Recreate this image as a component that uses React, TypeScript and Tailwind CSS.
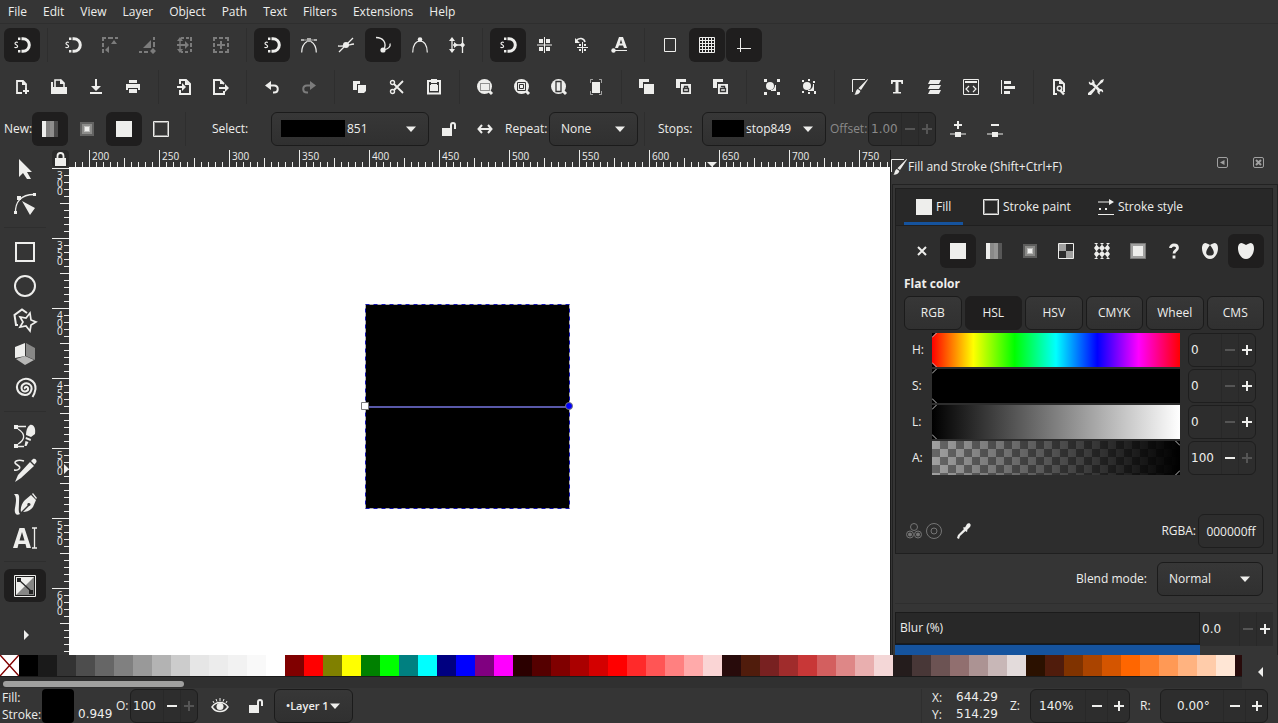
import React, { useState } from 'react';
import clsx from 'clsx';

const UI_FONT = 'font-["Open_Sans",sans-serif]';
const NUM_FONT = 'font-["DejaVu_Sans",sans-serif]';

const LINE = { fill: 'none', stroke: 'currentColor' };

const Magnet = (
  <>
    <path d="M7.5 1.7H9a6.3 6.3 0 0 1 0 12.6H7.5" {...LINE} strokeWidth="3" />
    <path d="M4 .4h2.4v2.6H4zM4 13h2.4v2.6H4z" />
    <path d="M3.8 5.5C2.500 4.800 1 5.200 1 6.500s2.600 1.200 2.600 2.700S1.800 10.900.400 10.300" {...LINE} strokeWidth="1.200" />
  </>
);

const FillStroke = (
  <>
    <path d="M.5 13V.5H13" {...LINE} />
    <path d="M15.600 0 16 .6 9 11 6.400 9.200zM5.800 10 8.400 12C8 14.600 5.400 16 2.400 15.800 4 14.600 3.400 11 5.800 10z" />
  </>
);

const LinearGradientIcon = (
  <g shapeRendering="crispEdges">
    <path d="M0 0h4v16H0z" />
    <path d="M4 0h4v16H4z" opacity=".48" />
    <path d="M8 0h4v16H8z" opacity=".54" />
    <path d="M12 0h4v16h-4z" opacity=".22" />
  </g>
);

const RadialGradientIcon = (
  <>
    <path d="M1 1h14v14H1z" opacity=".25" />
    <path d="M3 3h10v10H3z" opacity=".3" />
    <path d="M5 5h6v6H5z" opacity=".5" />
    <path d="M6 6h4v4H6z" />
  </>
);

const Flat = <path d="M0 0h16v16H0z" />;
const Outline = (
  <>
    <path d="M.5.5h15v15H.5z" {...LINE} />
    <path d="M1.5 1.5h13v13h-13z" {...LINE} opacity=".5" />
  </>
);

const Unlocked = (
  <path d="M1 7h8V4a3 3 0 0 1 6 0v4h-2V4a1 1 0 0 0-2 0v3h0v8H1z" />
);

const Lens = (
  <>
    <circle cx="7.5" cy="7.5" r="7.500" />
    <path d="m11 11 4 4" stroke="currentColor" strokeWidth="3" />
  </>
);

const Stack = <path d="M0 0h10v3H4v6H0zM5 5h10v10H5z" />;

const GLYPHS: Record<string, React.ReactNode> = {
  magnet: Magnet,
  snapEdge: (
    <>
      <path d="M0 1h4M6 1h5M13 1h3M1 0v4M1 6v4M1 12v4" {...LINE} strokeWidth="2" />
      <path d="m9 7 3-4 3 4zM3 13l4-4v7z" />
    </>
  ),
  snapCorner: (
    <>
      <path d="M0 15h3M5 15h4M15 0v3M15 5v5" {...LINE} strokeWidth="2" />
      <path d="M12 3v8H4zM14 11l3 3-3 3-3-3z" />
    </>
  ),
  snapEdgeMid: (
    <>
      <path d="M5 1h3M10 1h3M15 0v4M15 6v4M15 12v3M12 15h-3M7 15H5M1 8h10" {...LINE} strokeWidth="2" />
      <path d="M4 2v12" {...LINE} strokeWidth="1.4" />
      <path d="M1 4 4 0l3 4zM1 12l3 4 3-4zM9 4l4 4-4 4z" />
    </>
  ),
  snapCenter: (
    <path d="M0 1h4M6 1h4M12 1h4M0 15h4M6 15h4M12 15h4M1 1v3M1 6v4M1 12v3M15 1v3M15 6v4M15 12v3M8 4v8M4 8h8" {...LINE} strokeWidth="2" />
  ),
  snapNodes: (
    <>
      <path d="M.700 15.500C.700 11 2 7 6 4.500M15.300 15.500c0-4.500-1.300-8.500-5.300-11" {...LINE} strokeWidth="1.200" />
      <path d="M6 1h4v4H6zM0 2h3v2H0zM13 2h3v2h-3zM3 2.500h10v1H3z" opacity=".65" />
    </>
  ),
  snapCross: (
    <>
      <circle cx="8" cy="8" r="3" />
      <path d="M1 15 15 1M0 9c5 .5 10-1 16-2" {...LINE} strokeWidth="1.300" />
    </>
  ),
  snapCusp: (
    <>
      <path d="M1 .500c7 0 11 5 8 12M9 12.500c4 0 7-3 6-6" {...LINE} strokeWidth="1.300" />
      <circle cx="8" cy="13" r="2.600" />
    </>
  ),
  snapSmooth: (
    <>
      <path d="M.700 15.500C.700 8 4 4 8 4s7.300 4 7.300 11.500" {...LINE} strokeWidth="1.200" />
      <circle cx="8" cy="2.500" r="2.300" />
    </>
  ),
  snapMidpoint: (
    <>
      <path d="M3 2v12M13.500 0v16M4 8h10" {...LINE} strokeWidth="1.300" />
      <path d="M0 4 3 0l3 4zM0 12l3 4 3-4zM5 5l4 3-4 3zM13.500 5 16 8l-2.500 3L11 8z" />
    </>
  ),
  snapObject: (
    <>
      <path d="M2 2h4v4H2zM9 2h4v4H9zM2 10h4v4H2zM9 10h4v4H9z" />
      <path d="M7.500 0v16M0 8h15" {...LINE} />
    </>
  ),
  snapRotation: (
    <>
      <path d="M2 4c3-4 8-3 9 1" {...LINE} strokeWidth="1.600" />
      <path d="M1 1v5h5zM5 7h2v2H5zM10 7h2v2h-2zM5 12h2v2H5zM10 12h2v2h-2z" />
      <path d="M8.500 5v11M3 10.500h11" {...LINE} />
    </>
  ),
  snapText: (
    <>
      <path fillRule="evenodd" d="M4 11 8 0h4l4 11h-3l-1-2.500H8L7 11zM8.700 6.500h2.600L10 2.500z" />
      <path d="M2 13.500h14" {...LINE} />
      <circle cx="2.500" cy="13.500" r="2.200" />
    </>
  ),
  page: <path d="M2.500 1.500h11v13h-11z" {...LINE} />,
  gridLines: (
    <>
      <path d="M.5.5h15v15H.5z" {...LINE} />
      <path d="M3.500 0v16M6.500 0v16M9.500 0v16M12.500 0v16M0 3.500h16M0 6.500h16M0 9.500h16M0 12.500h16" {...LINE} />
    </>
  ),
  guides: <path d="M4.500 1v14M1 11.500h14" {...LINE} />,
  docNew: (
    <>
      <path d="M8 14H3V2h6l3 3v4" {...LINE} strokeWidth="1.800" />
      <path d="M8 1v5h5zM11 9h2v6h-2zM9 11h6v2H9z" />
    </>
  ),
  docOpen: (
    <>
      <path d="M4 8V1h6l3 3v4" {...LINE} strokeWidth="1.600" />
      <path d="M9 0v5h5zM0 3h2v5h14v7H0z" />
    </>
  ),
  save: <path d="M7 0h2v7h4L8 12 3 7h4zM2 13h12v2H2z" />,
  print: <path d="M4 1h8v3H4zM1 5h14v6h-2V9H3v2H1zM4 10h8v4H4z" />,
  importDoc: (
    <>
      <path d="M4 5V1h6l4 4v10H4v-4" {...LINE} strokeWidth="2" />
      <path d="M9 1v5h5zM1 7h5V4l4 4-4 4V9H1z" />
    </>
  ),
  exportDoc: (
    <>
      <path d="M11 12v3H1V1h6l4 4" {...LINE} strokeWidth="2" />
      <path d="M7 1v4h4zM6 8h6V5l4 4-4 4v-3H6z" />
    </>
  ),
  undo: (
    <>
      <path d="M3 6.500h7c5 0 5 7 0 7H9" {...LINE} strokeWidth="2" />
      <path d="M7 2v9L1 6.500z" />
    </>
  ),
  redo: (
    <>
      <path d="M13 6.500H6c-5 0-5 7 0 7h1" {...LINE} strokeWidth="2" />
      <path d="M9 2v9l6-4.500z" />
    </>
  ),
  copy: <path d="M1 2h7v3H5v6H1zM6 6h8v6l-2 2H6z" />,
  cut: (
    <>
      <path d="M5 5l9 9M5 11l9-9" {...LINE} strokeWidth="1.800" />
      <circle cx="3.500" cy="3.500" r="2" {...LINE} strokeWidth="1.400" />
      <circle cx="3.500" cy="12.500" r="2" {...LINE} strokeWidth="1.400" />
    </>
  ),
  paste: (
    <>
      <path d="M2 2h12v12.500H2z" {...LINE} strokeWidth="2" />
      <path d="M5 0h6v4H5zM5 5h6v1h1v6H4V6h1z" />
    </>
  ),
  zoomSelection: (
    <>
      {Lens}
      <path d="M3.500 4.500h9v7h-9z" fill="none" stroke="#353535" strokeDasharray="1 1" />
    </>
  ),
  zoomDrawing: (
    <>
      {Lens}
      <path d="M3.500 3.500h8v8h-8z" fill="none" stroke="#353535" />
      <path d="M5.500 5.500h4v4h-4z" fill="none" stroke="#353535" />
    </>
  ),
  zoomPage: (
    <>
      {Lens}
      <path d="M5 2.500h5v10H5z" fill="none" stroke="#353535" strokeWidth="1.300" />
    </>
  ),
  zoomCenter: (
    <>
      <path d="M4 3h8v11H4z" />
      <path d="M2.500 4V.500H5M11 .500h2.500V4M2.500 12v3.500H5M11 15.500h2.500V12" {...LINE} opacity=".6" />
    </>
  ),
  duplicate: Stack,
  clone: (
    <>
      {Stack}
      <path d="M7.500 9.500h5v3h-5zM8.500 9.500v-2h3v2" fill="none" stroke="#353535" strokeWidth="1.300" />
    </>
  ),
  unclone: (
    <>
      {Stack}
      <path d="M7.500 9.500h5v3h-5zM8.500 8V7.500h3v2" fill="none" stroke="#353535" strokeWidth="1.300" />
    </>
  ),
  group: (
    <>
      <path d="M0 0h3v3H0zM13 0h3v3h-3zM0 13h3v3H0zM13 13h3v3h-3z" />
      <circle cx="6" cy="7" r="4" />
      <path d="M11 6h1v6H7v-1c2 0 4-2 4-5z" />
    </>
  ),
  ungroup: (
    <>
      <path d="M1 1h2v2H1zM7 0h2v2H7zM12 2h2v2h-2zM1 12h2v2H1zM7 13h2v2H7zM13 12h2v3h-2z" />
      <circle cx="6" cy="7" r="4" />
      <path d="M12 5h1v7H7v-1c3 0 5-2 5-6z" />
    </>
  ),
  fillStroke: FillStroke,
  text: <path d="M2 1h12v4h-1.500L12 3H9.500v10H12v1.500H4V13h2.500V3H4l-.5 2H2z" />,
  layers: <path d="M4 1h11l-2 4H2zM4 6h11l-2 4H2zM4 11h11l-2 4H2z" />,
  xml: (
    <>
      <path d="M.5.5h15v15H.5z" {...LINE} />
      <path d="M2 2h12v2H2z" />
      <path d="m6 7-3 3 3 3M10 7l3 3-3 3" {...LINE} strokeWidth="1.200" />
    </>
  ),
  align: <path d="M1 1h1v14H1zM4 2h7v3H4zM4 7h11v3H4zM4 12h6v3H4z" />,
  docProps: (
    <>
      <path d="M6 15H3V1h6l4 4v8" {...LINE} strokeWidth="2" />
      <path d="M8 1v4h5z" />
      <circle cx="8.500" cy="9.500" r="2.200" {...LINE} strokeWidth="1.500" />
      <path d="m9 11 4 4.500" stroke="currentColor" strokeWidth="2.400" />
    </>
  ),
  prefs: (
    <>
      <path d="m4 4 8 8" {...LINE} strokeWidth="2.600" />
      <path d="M11 5 5 11" {...LINE} strokeWidth="1.400" />
      <path d="M1 2.500C0 5 3 7 5.500 5.500S6 1 4 .500L4.500 3 3 4zM15 13.500c1-2.500-2-4.500-4.500-3s-.500 4.500 1.500 5l-.500-2.500 1.500-1z" />
      <path d="m10 5 3-4 3-1-1 3-4 3zM6 9l1.500 1.500L3 16H0v-2z" />
    </>
  ),
  linear: LinearGradientIcon,
  radial: RadialGradientIcon,
  flat: Flat,
  outline: Outline,
  unlocked: Unlocked,
  reverse: (
    <path d="M5 4 1.500 8 5 12M11 4l3.500 4-3.500 4M2 8h12" {...LINE} strokeWidth="2" />
  ),
  stopAdd: <path d="M7 0h2v3h3v2H9v3H7V5H4V3h3zM0 12.500h5V11h6v1.500h5v1h-5V16H5v-2.500H0z" />,
  stopRemove: <path d="M4 3h8v2H4zM0 12.500h5V11h6v1.500h5v1h-5V16H5v-2.500H0z" />,
  none: <path d="m4 4 8 8M12 4l-8 8" {...LINE} strokeWidth="2" />,
  pattern: (
    <>
      <path d="M.5.5h15v15H.5z" {...LINE} />
      <path d="M1 1h7v7H1zM8 8h7v7H8z" opacity=".6" />
    </>
  ),
  mesh: (
    <path d="M0 0h4L2.500 2zM6 0h4L8 2zM12 0h4l-2 2zM2.500 1.500 5.500 5l-3 3.500L0 5zM8 1.500 11 5 8 8.500 5 5zM13.500 1.500 16 5l-2.500 3.500-3-3.500zM2.500 7.500l3 3.500-3 3.500L0 11zM8 7.500l3 3.500-3 3.500L5 11zM13.500 7.500 16 11l-2.500 3.500-3-3.500zM0 16l2.500-2L4 16zM6 16l2-2 2 2zM12 16l2-2 2 2z" />
  ),
  swatch: (
    <>
      <path d="M.5.5h15v15H.5z" {...LINE} opacity=".4" />
      <path d="M1 1h14v14H1z" opacity=".6" />
      <path d="M3 3h10v10H3z" />
    </>
  ),
  unknown: (
    <path d="M4.500 5c0-4 7-4 7 0 0 2.500-3.500 2.500-3.500 5.500M8 12.500v3" {...LINE} strokeWidth="2.800" />
  ),
  evenOdd: (
    <path fillRule="evenodd" d="M3 0c2 0 3 1 5 2 2-1 3-2 5-2 3 1 3 4 3 6-.5 6-4 10-8 10S.5 12 0 6c0-2 0-5 3-6zM8 2C5 6 3.500 9 4.500 11s6 2 7 0S11 6 8 2z" />
  ),
  nonZero: <path d="M3 0c2 0 3 1 5 2 2-1 3-2 5-2 3 1 3 4 3 6-.5 6-4 10-8 10S.5 12 0 6c0-2 0-5 3-6z" />,
  strokeStyle: (
    <>
      <path d="M0 3h12M0 15.500h16" {...LINE} strokeWidth="1.200" />
      <path d="M11 0l5 3-5 3zM1 9h2v2H1zM7 9h2v2H7z" />
    </>
  ),
  eyedropper: <path d="M11 1c2-2 5 0 3 3l-3 3 .5 1-1 1-1-1L4 13l-1 3-2-1 1-3 6-6-1-1 1-1 1 .5z" />,
  managed: (
    <>
      <circle cx="8" cy="4" r="3.500" {...LINE} />
      <circle cx="4" cy="11.500" r="3.500" {...LINE} />
      <circle cx="12" cy="11.500" r="3.500" {...LINE} />
      <circle cx="4" cy="11.500" r="2" />
      <circle cx="12" cy="11.500" r="2" />
    </>
  ),
  gamut: (
    <>
      <circle cx="8" cy="8" r="7.500" {...LINE} />
      <circle cx="8" cy="8" r="3" {...LINE} />
    </>
  ),
  eye: (
    <>
      <path d="M0 9c4-6 12-6 16 0-4 6-12 6-16 0z" {...LINE} strokeWidth="1.500" />
      <circle cx="8" cy="8.500" r="3.500" />
      <path d="m2 5-1-2M5 3.500 4 1M8 3V0M11 3.500 12 1M14 5l1-2" {...LINE} />
    </>
  ),
};

// toolbox drawings live on a 24 unit grid
const TOOL_GLYPHS: Record<string, React.ReactNode> = {
  selector: <path d="M6 1v18l4-4 4 6h4l-4-7h5z" />,
  node: (
    <>
      <path d="M2.500 21C2 10 8 2.500 21 2.500" {...LINE} strokeWidth="1.300" />
      <path d="M1 19h3v3H1zM4 4h4v4H4zM20 1h3v3h-3zM9 9l13 7-5 7z" />
    </>
  ),
  rect: <path d="M3 3h18v18H3z" {...LINE} strokeWidth="2" />,
  ellipse: <circle cx="12" cy="12" r="10" {...LINE} strokeWidth="2" />,
  star: (
    <>
      <path d="M5 17H3L1.500 7 9 1.500 14 5" {...LINE} strokeWidth="2" />
      <path d="m17 5 1 7 5 2-5 3-1 6-4-5-6 1 3-5-3-5 6 1z" {...LINE} strokeWidth="1.700" />
    </>
  ),
  box3d: (
    <>
      <path d="m2 5 10-4v13L2 16z" />
      <path d="m13 1 9 5v12l-9-4z" opacity=".45" />
      <path d="m3 17 9-3 9 4-9 5z" opacity=".7" />
    </>
  ),
  spiral: (
    <path d="M12 13c-1-2 2-3 3-1 1 3-4 5-6 2-2-5 3-8 7-6 5 3 2 11-4 11C3 18 2 9 7 5c6-5 16-1 15.500 8-.5 3-1.500 6-3 8" {...LINE} strokeWidth="2" />
  ),
  pen: (
    <>
      <path d="M1 1h4v4H1zM1 20h4v4H1zM17 1c4-1 6 4 5 9l-4 3-5-2c0-4 1-8 4-10zM13 13l5 2-.5 2-5-2zM12.500 17l3 1-1 2-1 2h-2z" />
      <path d="M5 2.500h8M5 22.500h6M5 5c8 5 7 11 0 15" {...LINE} strokeWidth="1.300" />
    </>
  ),
  pencil: (
    <>
      <path d="M11 3C4 1 0 4 3 6s5 3 3 5-4 1-5 1" {...LINE} strokeWidth="1.600" />
      <path d="m17 4 4 4L8 20l-6 4 3-7zM18 3l2-2c2-1 4 1 3.500 3l-2 2.500z" />
    </>
  ),
  calligraphy: (
    <>
      <path d="M1 2h3c3 0 2 5 2 9s-1 9 1 11c-4 2-6-1-5-6 1-6 2-11-1-14z" />
      <path fillRule="evenodd" d="m18 3 5 5-3 7c-3 4-7 5-10 5l6-6c2 0 2-3 0-3-1.500 0-2 1-1.500 2.500L8 20c-1-4 1-9 4-12zM19 2l1-1 4 5-1 1z" />
    </>
  ),
  textTool: (
    <>
      <path fillRule="evenodd" d="M0 22 6.500 2h5L18 22h-4.500l-1-4h-7l-1 4zM6.500 14.500h5L9 6z" />
      <path d="M21.500 2.500v19M19 2h5M19 22h5" {...LINE} strokeWidth="1.300" />
    </>
  ),
  gradientTool: (
    <>
      <path d="M1.500 1.500h21v21h-21z" {...LINE} />
      <path d="M3 3h18v18H3z" opacity=".5" />
      <path d="M3 3h18L3 21z" />
      <path d="m6 6 13 12" stroke="#222" strokeWidth="1.300" />
      <path d="M4 4h4v4H4zM16 16h4v4h-4z" fill="#222" />
    </>
  ),
};

function Glyph({ name }: { name: string }) {
  return (
    <svg viewBox="0 0 16 16" className="w-4 h-4 shrink-0 overflow-visible" fill="currentColor" aria-hidden="true">
      {GLYPHS[name]}
    </svg>
  );
}

interface ToolButtonProps {
  icon: string;
  label: string;
  active?: boolean;
  dim?: boolean;
}

function ToolButton({ icon, label, active = false, dim = false }: ToolButtonProps) {
  const [on, setOn] = useState(active);
  return (
    <button
      type="button"
      aria-label={label}
      onClick={() => active && setOn(!on)}
      className={clsx(
        'w-9 h-[34px] shrink-0 flex items-center justify-center rounded-md',
        on && 'bg-[#1f1e1e]',
        dim && 'text-[#7c7c7c]'
      )}
    >
      <Glyph name={icon} />
    </button>
  );
}

function Separator() {
  return <div className="w-px h-[34px] shrink-0 mx-[6px] bg-[#2e2e2e]" />;
}

function Arrow({ className }: { className: string }) {
  return (
    <svg viewBox="0 0 10 6" className={clsx('w-[10px] h-[6px] pointer-events-none', className)} fill="currentColor" aria-hidden="true">
      <path d="M0 .5h10L5 6z" />
    </svg>
  );
}

interface ComboProps {
  id: string;
  label: string;
  value: string;
  className: string;
  textClass: string;
  swatch?: string;
}

function Combo({ id, label, value, className, textClass, swatch }: ComboProps) {
  return (
    <div className={clsx('relative h-[34px] shrink-0', className)}>
      <select
        id={id}
        aria-label={label}
        className={clsx(
          'appearance-none w-full h-full rounded-md border border-[#1b1b1b] bg-gradient-to-b from-[#373737] to-[#303030]',
          textClass
        )}
      >
        <option>{value}</option>
      </select>
      {swatch && <span className={clsx('absolute left-[10px] top-2 h-[17px] bg-black', swatch)} />}
      <Arrow className="absolute right-[13px] top-[14px]" />
    </div>
  );
}

interface SpinProps {
  id: string;
  label: string;
  value: string;
  className?: string;
  inputClass?: string;
  stepClass?: string;
  minusDim?: boolean;
  plusDim?: boolean;
  frame?: boolean;
}

function Spin({
  id,
  label,
  value,
  className = 'w-[68px]',
  inputClass = 'pl-[2px]',
  stepClass = 'w-[17px]',
  minusDim,
  plusDim,
  frame = true,
}: SpinProps) {
  return (
    <div className={clsx('flex h-[34px] shrink-0 overflow-hidden bg-[#2d2d2d]', frame && 'rounded-md border border-[#1e1e1e]', className)}>
      <input
        id={id}
        aria-label={label}
        defaultValue={value}
        className={clsx('flex-1 min-w-0 bg-transparent outline-none', NUM_FONT, inputClass)}
      />
      <button type="button" aria-label={`${label} decrease`} className={clsx('flex items-center justify-center border-l border-[#282828]', stepClass, minusDim && 'text-[#555]')}>
        <svg viewBox="0 0 10 10" className="w-[10px] h-[10px]" fill="currentColor">
          <path d="M0 4h10v2H0z" />
        </svg>
      </button>
      <button type="button" aria-label={`${label} increase`} className={clsx('flex items-center justify-center border-l border-[#282828]', stepClass, plusDim && 'text-[#555]')}>
        <svg viewBox="0 0 10 10" className="w-[10px] h-[10px]" fill="currentColor">
          <path d="M4 0h2v4h4v2H6v4H4V6H0V4h4z" />
        </svg>
      </button>
    </div>
  );
}

const MENUS = ['File', 'Edit', 'View', 'Layer', 'Object', 'Path', 'Text', 'Filters', 'Extensions', 'Help'];

const SNAP_GROUPS: ToolButtonProps[][] = [
  [{ icon: 'magnet', label: 'Enable snapping', active: true }],
  [
    { icon: 'magnet', label: 'Snap bounding boxes' },
    { icon: 'snapEdge', label: 'Snap to edges', dim: true },
    { icon: 'snapCorner', label: 'Snap to corners', dim: true },
    { icon: 'snapEdgeMid', label: 'Snap edge midpoints', dim: true },
    { icon: 'snapCenter', label: 'Snap centers', dim: true },
  ],
  [
    { icon: 'magnet', label: 'Snap nodes', active: true },
    { icon: 'snapNodes', label: 'Snap to paths' },
    { icon: 'snapCross', label: 'Snap to path intersections' },
    { icon: 'snapCusp', label: 'Snap cusp nodes', active: true },
    { icon: 'snapSmooth', label: 'Snap smooth nodes' },
    { icon: 'snapMidpoint', label: 'Snap line midpoints' },
  ],
  [
    { icon: 'magnet', label: 'Snap other points', active: true },
    { icon: 'snapObject', label: 'Snap object centers' },
    { icon: 'snapRotation', label: 'Snap rotation centers' },
    { icon: 'snapText', label: 'Snap text baselines' },
  ],
  [
    { icon: 'page', label: 'Snap to page border' },
    { icon: 'gridLines', label: 'Snap to grids', active: true },
    { icon: 'guides', label: 'Snap to guides', active: true },
  ],
];

const COMMAND_GROUPS: ToolButtonProps[][] = [
  [
    { icon: 'docNew', label: 'New' },
    { icon: 'docOpen', label: 'Open' },
    { icon: 'save', label: 'Save' },
    { icon: 'print', label: 'Print' },
  ],
  [
    { icon: 'importDoc', label: 'Import' },
    { icon: 'exportDoc', label: 'Export' },
  ],
  [
    { icon: 'undo', label: 'Undo' },
    { icon: 'redo', label: 'Redo', dim: true },
  ],
  [
    { icon: 'copy', label: 'Copy' },
    { icon: 'cut', label: 'Cut' },
    { icon: 'paste', label: 'Paste' },
  ],
  [
    { icon: 'zoomSelection', label: 'Zoom selection' },
    { icon: 'zoomDrawing', label: 'Zoom drawing' },
    { icon: 'zoomPage', label: 'Zoom page' },
    { icon: 'zoomCenter', label: 'Center page' },
  ],
  [
    { icon: 'duplicate', label: 'Duplicate' },
    { icon: 'clone', label: 'Clone' },
    { icon: 'unclone', label: 'Unlink clone' },
  ],
  [
    { icon: 'group', label: 'Group' },
    { icon: 'ungroup', label: 'Ungroup' },
  ],
  [
    { icon: 'fillStroke', label: 'Fill and stroke' },
    { icon: 'text', label: 'Text and font' },
    { icon: 'layers', label: 'Layers' },
    { icon: 'xml', label: 'XML editor' },
    { icon: 'align', label: 'Align' },
  ],
  [
    { icon: 'docProps', label: 'Document properties' },
    { icon: 'prefs', label: 'Preferences' },
  ],
];

function ToolbarRow({ groups }: { groups: ToolButtonProps[][] }) {
  return (
    <div className="flex items-center gap-px h-[42px] pl-1">
      {groups.map((group, i) => (
        <React.Fragment key={i}>
          {i > 0 && <Separator />}
          {group.map(item => (
            <ToolButton key={item.label} {...item} />
          ))}
        </React.Fragment>
      ))}
    </div>
  );
}

function GradientBar() {
  return (
    <div className="flex items-center h-[42px] pl-1">
      <span className="w-7 shrink-0">New:</span>
      <div className="flex gap-px">
        <ToolButton icon="linear" label="Linear gradient" active />
        <ToolButton icon="radial" label="Radial gradient" />
        <ToolButton icon="flat" label="Gradient in fill" active />
        <ToolButton icon="outline" label="Gradient in stroke" />
      </div>
      <Separator />
      <label htmlFor="gradient" className="w-[79px] pl-5 shrink-0">Select:</label>
      <Combo id="gradient" label="Gradient" value="851" className="w-[158px]" textClass="pl-[75px]" swatch="w-16" />
      <div className="flex px-[2px]">
        <ToolButton icon="unlocked" label="Link gradients" />
        <ToolButton icon="reverse" label="Reverse" />
      </div>
      <label htmlFor="repeat" className="w-11 shrink-0">Repeat:</label>
      <Combo id="repeat" label="Repeat" value="None" className="w-[89px]" textClass="pl-[11px]" />
      <Separator />
      <label htmlFor="stops" className="w-[51px] pl-[7px] shrink-0">Stops:</label>
      <Combo id="stops" label="Stops" value="stop849" className="w-[124px]" textClass="pl-[43px]" swatch="w-8" />
      <label htmlFor="offset" className="w-[42px] pl-1 shrink-0 text-[#8a8a8a]">Offset:</label>
      <Spin id="offset" label="Offset" value="1.00" inputClass="pl-[2px] text-[#8a8a8a]" minusDim plusDim />
      <div className="flex gap-px pl-1">
        <ToolButton icon="stopAdd" label="Insert stop" />
        <ToolButton icon="stopRemove" label="Delete stop" />
      </div>
    </div>
  );
}

const TOOL_GROUPS = [
  ['selector', 'node'],
  ['rect', 'ellipse', 'star', 'box3d', 'spiral'],
  ['pen', 'pencil', 'calligraphy', 'textTool'],
  ['gradientTool'],
];

function Toolbox() {
  const [tool, setTool] = useState('gradientTool');
  return (
    <nav className="w-[52px] shrink-0 flex flex-col pl-1 pt-[3px] overflow-hidden">
      {TOOL_GROUPS.map((group, i) => (
        <div key={i} className={clsx('w-[42px] flex flex-col gap-px', i > 0 && 'mt-[7px] pt-[7px] border-t border-[#2e2e2e]')}>
          {group.map(name => (
            <button
              key={name}
              type="button"
              aria-label={name}
              onClick={() => setTool(name)}
              className={clsx('h-[33px] shrink-0 flex items-center justify-center rounded-md', tool === name && 'bg-[#1f1e1e]')}
            >
              <svg viewBox="0 0 24 24" className="w-6 h-6 overflow-visible" fill="currentColor" aria-hidden="true">
                {TOOL_GLYPHS[name]}
              </svg>
            </button>
          ))}
        </div>
      ))}
      <button type="button" aria-label="More tools" className="w-11 h-[33px] mt-4 shrink-0 flex items-center justify-center">
        <svg viewBox="0 0 5 10" className="w-[5px] h-[10px]" fill="currentColor"><path d="M0 0v10l5-5z" /></svg>
      </button>
    </nav>
  );
}

const MINOR = [7, 14, 21, 28, 42, 49, 56, 63];
const H_LABELS = [200, 250, 300, 350, 400, 450, 500, 550, 600, 650, 700, 750];
const V_LABELS = [300, 350, 400, 450, 500, 550, 600];

function HorizontalTicks() {
  return (
    <svg viewBox="0 0 70 17" className="absolute left-0 top-0 w-[70px] h-[17px]" fill="currentColor" aria-hidden="true">
      <path d="M0 0h1v17H0zM35 8h1v9h-1z" />
      {MINOR.map(x => <path key={x} d={`M${x} 12h1v5h-1z`} />)}
    </svg>
  );
}

function HorizontalRuler() {
  return (
    <div className="relative flex flex-1 h-[17px] overflow-hidden">
      <div className="flex -ml-[50px] text-[10px] leading-[13px]">
        <div className="relative w-[70px] shrink-0">
          <HorizontalTicks />
        </div>
        {H_LABELS.map(n => (
          <div key={n} className="relative w-[70px] shrink-0 pl-[3px]">
            <HorizontalTicks />
            {n}
          </div>
        ))}
      </div>
      <svg viewBox="0 0 10 5" className="absolute left-[638px] bottom-0 w-[10px] h-[5px]" fill="currentColor" aria-hidden="true">
        <path d="M0 0h10L5 5z" />
      </svg>
    </div>
  );
}

function VerticalRuler() {
  return (
    <div className="relative w-[17px] shrink-0 overflow-hidden pt-px">
      {V_LABELS.map(n => (
        <div key={n} className="relative h-[70px] pt-[3px] pl-[5px]">
          <svg viewBox="0 0 17 70" className="absolute left-0 top-0 w-[17px] h-[70px]" fill="currentColor" aria-hidden="true">
            <path d="M0 0h17v1H0zM8 35h9v1H8z" />
            {MINOR.map(y => <path key={y} d={`M12 ${y}h5v1h-5z`} />)}
          </svg>
          <div className="w-[6px] break-all text-[10px] leading-[8px]">{n}</div>
        </div>
      ))}
      <svg viewBox="0 0 5 10" className="absolute right-0 top-[297px] w-[5px] h-[10px]" fill="currentColor" aria-hidden="true">
        <path d="M0 0v10l5-5z" />
      </svg>
    </div>
  );
}

function Canvas() {
  return (
    <main className="relative flex-1 bg-white overflow-hidden">
      <svg viewBox="0 0 214 212" className="absolute left-[291px] top-[133px] w-[214px] h-[212px]" aria-label="Selected rectangle">
        <path d="M6 5h203v203H6z" fill="#000" />
        <path d="M5.500 4.500h204v204h-204z" fill="none" stroke="#b4b4b4" />
        <path d="M5.500 4.500h204v204h-204z" fill="none" stroke="#1414b4" strokeDasharray="4 4" />
        <path d="M5 107h204" stroke="#5858a8" strokeWidth="2" />
        <path d="M1.500 102.500h7v7h-7z" fill="#fff" stroke="#7a7a7a" />
        <circle cx="209" cy="106" r="3.500" fill="#00f" stroke="#7a7a7a" />
      </svg>
    </main>
  );
}

const PAINTS: ToolButtonProps[] = [
  { icon: 'none', label: 'No paint' },
  { icon: 'flat', label: 'Flat color paint', active: true },
  { icon: 'linear', label: 'Linear gradient paint' },
  { icon: 'radial', label: 'Radial gradient paint' },
  { icon: 'pattern', label: 'Pattern paint' },
  { icon: 'mesh', label: 'Mesh paint' },
  { icon: 'swatch', label: 'Swatch paint' },
  { icon: 'unknown', label: 'Unset paint' },
  { icon: 'evenOdd', label: 'Even-odd fill rule' },
  { icon: 'nonZero', label: 'Nonzero fill rule', active: true },
];

const MODES = ['RGB', 'HSL', 'HSV', 'CMYK', 'Wheel', 'CMS'];

const CHANNELS = [
  { key: 'H', value: 0, track: 'bg-[linear-gradient(to_right,#f00,#ff0,#0f0,#0ff,#00f,#f0f,#f00)]' },
  { key: 'S', value: 0, track: 'bg-black' },
  { key: 'L', value: 0, track: 'bg-[linear-gradient(to_right,#000,#fff)]' },
  {
    key: 'A',
    value: 100,
    track: 'bg-[linear-gradient(to_right,transparent,#000),repeating-conic-gradient(#666_0_25%,#a0a0a0_0_50%)] bg-[length:100%_100%,16px_16px]',
  },
];

function Channel({ name, value, track }: { name: string; value: number; track: string }) {
  return (
    <div className="flex items-center h-9">
      <label htmlFor={`slider-${name}`} className="w-5 shrink-0">{name}:</label>
      <div className="relative flex-1 h-[34px]">
        <input
          id={`slider-${name}`}
          type="range"
          min={0}
          max={100}
          defaultValue={value}
          className={clsx('block w-full h-full appearance-none [&::-webkit-slider-thumb]:opacity-0', track)}
        />
        <svg
          viewBox="0 0 5 34"
          className={clsx('absolute top-0 w-[5px] h-[34px] pointer-events-none', value === 100 ? 'right-0 -scale-x-100' : 'left-0')}
          aria-hidden="true"
        >
          <path d="M0 0h4L0 4zM0 34h4L0 30z" fill="#000" />
          <path d="M0 4.500 4.500 0M0 29.500 4.500 34" stroke="#bbb" />
        </svg>
      </div>
      <div className="pl-2">
        <Spin id={`spin-${name}`} label={`${name} value`} value={String(value)} minusDim={value === 0} plusDim={value === 100} />
      </div>
    </div>
  );
}

function FillStrokePanel() {
  const [mode, setMode] = useState('HSL');
  return (
    <aside className="w-[388px] shrink-0 flex flex-col border-l border-[#1b1b1b] overflow-hidden">
      <header className="flex items-center h-[34px] shrink-0">
        <Glyph name="fillStroke" />
        <h2 className="pl-px flex-1">Fill and Stroke (Shift+Ctrl+F)</h2>
        <div className="flex gap-[25px] pr-[14px] pb-[9px] text-[#a0a0a0]">
          <button type="button" aria-label="Iconify dialog">
            <svg viewBox="0 0 11 11" className="w-[11px] h-[11px]" fill="none" stroke="currentColor">
              <rect x=".5" y=".5" width="10" height="10" rx="1.5" />
              <path d="M7.500 3v5L3 5.500z" fill="currentColor" stroke="none" />
            </svg>
          </button>
          <button type="button" aria-label="Close dialog">
            <svg viewBox="0 0 11 11" className="w-[11px] h-[11px]" fill="none" stroke="currentColor">
              <rect x=".5" y=".5" width="10" height="10" rx="1.5" />
              <path d="m3 3 5 5M8 3 3 8" strokeWidth="2" />
            </svg>
          </button>
        </div>
      </header>

      <div className="flex-1 min-h-0 flex flex-col ml-px border border-b-0 border-[#222] pl-[2px] pr-1 pt-[3px]">
        <section className="shrink-0 border border-[#1f1f1f] bg-[#2d2d2d]">
          {/* Tabs */}
          <div role="tablist" className="flex h-[37px] pl-2 bg-[#282828] border-b border-[#1f1f1f]">
            <button type="button" role="tab" aria-selected="true" className="flex items-center gap-1 w-[59px] pl-3 border-b-[3px] border-[#15539e] pt-[2px]">
              <Glyph name="flat" />
              Fill
            </button>
            <button type="button" role="tab" aria-selected="false" className="flex items-center gap-1 w-[115px] pl-5">
              <Glyph name="outline" />
              Stroke paint
            </button>
            <button type="button" role="tab" aria-selected="false" className="flex items-center gap-1 pl-5">
              <Glyph name="strokeStyle" />
              Stroke style
            </button>
          </div>

          {/* Paint kind */}
          <div className="px-2 pt-2">
            <div className="flex">
              {PAINTS.map(p => <ToolButton key={p.label} {...p} />)}
            </div>
            <h3 className="font-bold pt-1 leading-6">Flat color</h3>
            <div className="grid grid-cols-6 gap-[3px]">
              {MODES.map(m => (
                <button
                  key={m}
                  type="button"
                  onClick={() => setMode(m)}
                  className={clsx(
                    'h-[34px] rounded-md border',
                    mode === m ? 'bg-[#1f1e1e] border-[#1f1e1e]' : 'border-[#1b1b1b] bg-gradient-to-b from-[#373737] to-[#303030]'
                  )}
                >
                  {m}
                </button>
              ))}
            </div>
            <div className="pt-[2px] px-2">
              {CHANNELS.map(c => <Channel key={c.key} name={c.key} value={c.value} track={c.track} />)}
            </div>
            <div className="flex items-center pt-[38px] pb-[5px]">
              <div className="flex items-center gap-1 pl-[2px] text-[#757575]">
                <Glyph name="managed" />
                <Glyph name="gamut" />
              </div>
              <button type="button" aria-label="Pick color" className="pl-[14px]">
                <Glyph name="eyedropper" />
              </button>
              <label htmlFor="rgba" className="ml-auto pr-[2px]">RGBA:</label>
              <input id="rgba" defaultValue="000000ff" className="w-[66px] h-[34px] rounded-md border border-[#1e1e1e] bg-[#2d2d2d] text-center" />
            </div>
          </div>
        </section>

        <div className="shrink-0 flex items-center justify-end gap-[10px] h-[50px] pr-[10px] border-b border-[#2e2e2e]">
          <label htmlFor="blend">Blend mode:</label>
          <Combo id="blend" label="Blend mode" value="Normal" className="w-[106px]" textClass="pl-[11px]" />
        </div>

        <div className="shrink-0 flex mt-2">
          <div className="flex-1">
            <label htmlFor="blur" className="flex items-center h-8 pl-1 bg-[#282828] border border-[#1b1b1b]">Blur (%)</label>
            <div className="h-3 bg-[#15539e] border-t border-[#0b1a2c]" />
          </div>
          <Spin id="blur" label="Blur" value="0.0" className="w-[73px]" frame={false} minusDim />
        </div>
      </div>
    </aside>
  );
}

const PALETTE = [
  '#000000', '#1a1a1a', '#333333', '#4d4d4d', '#666666', '#808080', '#999999', '#b3b3b3', '#cccccc', '#e6e6e6', '#ececec',
  '#f2f2f2', '#f9f9f9', '#ffffff', '#800000', '#ff0000', '#808000', '#ffff00', '#008000', '#00ff00', '#008080', '#00ffff',
  '#000080', '#0000ff', '#800080', '#ff00ff', '#2b0000', '#550000', '#800000', '#aa0000', '#d40000', '#ff0000', '#ff2a2a',
  '#ff5555', '#ff8080', '#ffaaaa', '#fad5d5', '#280b0b', '#501c0c', '#782121', '#a02c2c', '#c83737', '#d35f5f', '#de8787',
  '#e9afaf', '#f4d7d7', '#241c1c', '#483737', '#6c5353', '#916f6f', '#ac9393', '#c8b7b7', '#e3dbdb', '#2b1100', '#501c0c',
  '#803300', '#aa4400', '#d45500', '#ff6600', '#ff7f2a', '#ff9955', '#ffb380', '#ffccaa', '#ffe6d5', '#280b0b',
];

function PaletteBar() {
  return (
    <div className="flex h-[33px] shrink-0">
      <div className="flex-1 min-w-0">
        <div className="flex h-[22px] overflow-hidden border-b border-[#1b1b1b]">
          <button type="button" aria-label="No color" className="w-[19px] shrink-0 bg-white">
            <svg viewBox="0 0 19 21" className="w-[19px] h-[21px]" stroke="#800000" strokeWidth="1.5" aria-hidden="true">
              <path d="M0 0l19 21M19 0 0 21" />
            </svg>
          </button>
          {PALETTE.map((color, i) => (
            <button key={i} type="button" aria-label={color} className="w-[19px] shrink-0" style={{ backgroundColor: color }} />
          ))}
        </div>
        <div className="pt-1 pl-[3px] h-[11px] bg-[#303030]">
          <div className="w-[181px] h-[6px] rounded-full bg-[#a0a09f]" />
        </div>
      </div>
      <button type="button" aria-label="Palette menu" className="w-9 flex items-center justify-center">
        <svg viewBox="0 0 5 10" className="w-[5px] h-[10px]" fill="currentColor"><path d="M5 0v10L0 5z" /></svg>
      </button>
    </div>
  );
}

function StatusBar() {
  return (
    <footer className="flex items-center h-[35px] shrink-0">
      <div className="w-10 pl-[2px] shrink-0 leading-[17px]">
        <div>Fill:</div>
        <div>Stroke:</div>
      </div>
      <div className="w-8 h-[34px] ml-[2px] shrink-0 bg-black rounded-sm" />
      <span className={clsx('w-[42px] pl-1 pt-4 shrink-0', NUM_FONT)}>0.949</span>
      <label htmlFor="opacity" className="w-[14px] shrink-0">O:</label>
      <Spin id="opacity" label="Opacity" value="100" plusDim />
      <div className="flex pl-1">
        <ToolButton icon="eye" label="Layer visibility" />
        <ToolButton icon="unlocked" label="Layer lock" />
      </div>
      <div className="relative w-[79px] h-[34px] shrink-0">
        <select aria-label="Layer" className="appearance-none w-full h-full pl-[11px] rounded-md border border-[#1b1b1b] bg-gradient-to-b from-[#373737] to-[#303030] text-[11px] font-semibold">
          <option>•Layer 1</option>
        </select>
        <Arrow className="absolute right-[13px] top-[14px]" />
      </div>
      <div className="ml-auto flex items-center pr-[10px]">
        <div className="w-px h-[34px] mr-[10px] bg-[#2e2e2e]" />
        <div className="w-6 leading-[17px]">
          <div>X:</div>
          <div>Y:</div>
        </div>
        <div className={clsx('w-[54px] leading-[17px]', NUM_FONT)}>
          <div>644.29</div>
          <div>514.29</div>
        </div>
        <label htmlFor="zoom" className="w-5">Z:</label>
        <Spin id="zoom" label="Zoom" value="140%" className="w-[100px]" inputClass="pl-2" stepClass="w-[22px]" />
        <label htmlFor="rotation" className="w-[30px] pl-[10px]">R:</label>
        <Spin id="rotation" label="Rotation" value="0.00°" className="w-[108px]" inputClass="pl-4" stepClass="w-[22px]" />
      </div>
    </footer>
  );
}

export default function App() {
  return (
    <div className={clsx('h-screen flex flex-col overflow-hidden bg-[#353535] text-[#eeeeec] text-[12px] leading-4', UI_FONT)}>
      <div role="menubar" className="flex items-center h-6 shrink-0 border-b border-[#2e2e2e]">
        {MENUS.map(m => (
          <button key={m} type="button" role="menuitem" className="px-2">{m}</button>
        ))}
      </div>
      <div className="shrink-0">
        <ToolbarRow groups={SNAP_GROUPS} />
        <ToolbarRow groups={COMMAND_GROUPS} />
        <GradientBar />
      </div>

      <div className="flex flex-1 min-h-0">
        <Toolbox />
        <div className="flex-1 min-w-0 flex flex-col">
          <div className="flex shrink-0">
            <button type="button" aria-label="Lock guides" className="w-[17px] h-[17px] flex items-center justify-center rounded-sm bg-[#2a2a2a]">
              <svg viewBox="0 0 12 14" className="w-3 h-[14px]" fill="currentColor">
                <path d="M0 6h11v8H0z" />
                <path d="M2.500 7V4a3 3 0 0 1 6 0v3" {...LINE} strokeWidth="1.800" />
              </svg>
            </button>
            <HorizontalRuler />
          </div>
          <div className="flex flex-1 min-h-0">
            <VerticalRuler />
            <Canvas />
          </div>
        </div>
        <FillStrokePanel />
      </div>

      <PaletteBar />
      <StatusBar />
    </div>
  );
}
